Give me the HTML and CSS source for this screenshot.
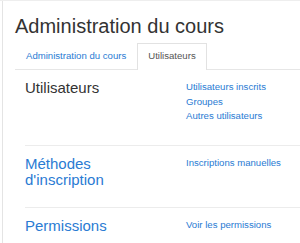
FILE: index.html
```html
<!DOCTYPE html>
<html lang="fr">
<head>
  <meta charset="UTF-8" />
  <meta name="viewport" content="width=device-width, initial-scale=1.0"/>
  <title>Administration du cours</title>
  <link rel="stylesheet" href="styles.css">
</head>
<body>
  <div class="page">
    <div class="card">
      <h2 class="title">Administration du cours</h2>
      <ul class="tabs">
        <li class="tab"><a href="#">Administration du cours</a></li>
        <li class="tab active"><span>Utilisateurs</span></li>
      </ul>
      <div class="sections">
        <div class="row">
          <h3 class="row-head">Utilisateurs</h3>
          <ul class="links">
            <li><a href="#">Utilisateurs inscrits</a></li>
            <li><a href="#">Groupes</a></li>
            <li><a href="#">Autres utilisateurs</a></li>
          </ul>
        </div>
        <div class="row second">
          <h3 class="row-head"><a href="#">Méthodes d'inscription</a></h3>
          <ul class="links">
            <li><a href="#">Inscriptions manuelles</a></li>
          </ul>
        </div>
        <div class="row">
          <h3 class="row-head"><a href="#">Permissions</a></h3>
          <ul class="links">
            <li><a href="#">Voir les permissions</a></li>
          </ul>
        </div>
      </div>
    </div>
  </div>
</body>
</html>
```

FILE: styles.css
```css
body {
  margin: 0;
  font-family: "Liberation Sans", Arial, sans-serif;
  background: #fff;
  color: #333;
}
a {
  color: #2a7bd3;
  text-decoration: none;
}
.page {
  border-top: 1px solid #eeeeee;
  overflow: hidden;
  height: 242px;
}
.card {
  margin-left: 2px;
  border-left: 1px solid #e4e4e4;
  padding-left: 12px;
  height: 100%;
}
.title {
  margin: 0;
  padding-top: 13px;
  font-size: 20px;
  line-height: 24px;
  font-weight: normal;
  color: #333;
}
.tabs {
  list-style: none;
  margin: 5px 0 0;
  padding: 0;
  display: flex;
  border-bottom: 1px solid #e6e6e6;
}
.tab {
  font-size: 9.6px;
  line-height: 24px;
  padding: 0 10px;
  border: 1px solid transparent;
  border-bottom: none;
  margin-bottom: -1px;
}
.tab.active {
  background: #fff;
  border-color: #e2e2e2;
  color: #555;
  height: 26px;
}
.sections {
  padding-left: 10px;
}
.row {
  display: grid;
  grid-template-columns: 161px 1fr;
  padding: 10px 0 21px;
  border-bottom: 1px solid #ececec;
}
.row.second {
  padding-bottom: 18px;
}
.row:last-child {
  border-bottom: none;
}
.row-head {
  margin: 0;
  padding-right: 20px;
  font-size: 15px;
  line-height: 16.5px;
  font-weight: normal;
  color: #333;
}
.links {
  list-style: none;
  margin: 0;
  padding: 0;
  font-size: 9.6px;
  line-height: 14.5px;
}
```
